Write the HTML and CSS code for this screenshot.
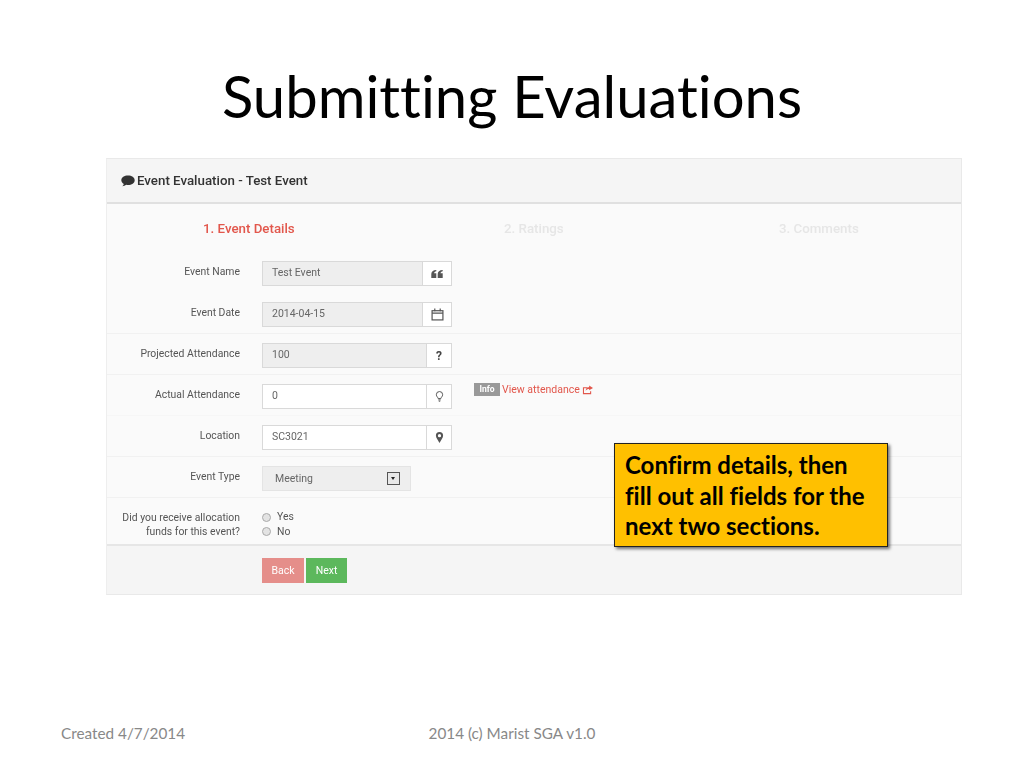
FILE: index.html
```html
<!DOCTYPE html>
<html lang="en">
<head>
    <meta charset="UTF-8">
    <title>Submitting Evaluations</title>
    <link rel="stylesheet" href="styles.css">
</head>
<body>
    <div class="slide">
        <h1 class="slide-title">Submitting Evaluations</h1>

        <div class="panel">
            <div class="panel-header">
                <svg class="icon-comment" viewBox="0 0 14 12"><path d="M7 .5C3.300 .5.300 2.600.300 5.200c0 1.500 1 2.800 2.500 3.700-.2.900-.7 1.700-1.500 2.400 1.500-.1 2.900-.7 3.900-1.500.6.100 1.200.2 1.800.2 3.700 0 6.700-2.100 6.700-4.800S10.700.5 7 .5z"/></svg>
                <span>Event Evaluation - Test Event</span>
            </div>

            <div class="steps">
                <div class="step active">1. Event Details</div>
                <div class="step">2. Ratings</div>
                <div class="step">3. Comments</div>
            </div>

            <div class="form">
                <!-- Campos do evento -->
                <div class="row no-line">
                    <label>Event Name</label>
                    <div class="group">
                        <div class="input disabled">Test Event</div>
                        <div class="addon wide">
                            <svg class="icon-quote" viewBox="0 0 12 8"><path d="M5.300 0v1.300C4 1.500 3.200 2.200 3.100 3.300h2.200V8H.3V4C.3 1.600 2 .2 5.300 0zM11.700 0v1.300c-1.300.2-2.100.9-2.200 2h2.200V8H6.700V4C6.700 1.600 8.400.2 11.700 0z"/></svg>
                        </div>
                    </div>
                </div>
                <div class="row">
                    <label>Event Date</label>
                    <div class="group">
                        <div class="input disabled">2014-04-15</div>
                        <div class="addon wide">
                            <svg class="stroke icon-calendar" viewBox="0 0 12 12"><rect x="1" y="2.500" width="10" height="8.500"/><path d="M1 4.800h10M3.500.5v2.500M8.500.5v2.500"/></svg>
                        </div>
                    </div>
                </div>
                <div class="row">
                    <label>Projected Attendance</label>
                    <div class="group">
                        <div class="input disabled">100</div>
                        <div class="addon"><b class="question">?</b></div>
                    </div>
                </div>
                <div class="row faint">
                    <label>Actual Attendance</label>
                    <div class="group">
                        <div class="input">0</div>
                        <div class="addon">
                            <svg class="stroke icon-pin" viewBox="0 0 10 12"><path d="M3.500 8.300C3.300 6.800 1.500 6 1.500 4A3.500 3.500 0 0 1 8.500 4C8.500 6 6.700 6.800 6.500 8.300z"/><path d="M3.700 9.800h2.600M4.200 11.200h1.600"/></svg>
                        </div>
                    </div>
                    <div class="help">
                        <span class="tag">Info</span>
                        <a href="#" class="help-link">View attendance
                            <svg viewBox="0 0 12 10"><path d="M1 2h5v1.200H2.200v5.100h6.600V6.300H10v3.200H1zM7.800 0L12 2.700 7.800 5.400V4C6 4 4.800 4.600 4 6c0-2.500 1.500-4 3.800-4.300z"/></svg>
                        </a>
                    </div>
                </div>
                <div class="row">
                    <label>Location</label>
                    <div class="group">
                        <div class="input">SC3021</div>
                        <div class="addon">
                            <svg class="icon-pin" viewBox="0 0 10 12"><path fill-rule="evenodd" d="M5 0a4 4 0 0 0-4 4c0 2.500 2.800 5.500 4 8 1.200-2.500 4-5.500 4-8a4 4 0 0 0-4-4zm0 2.200a1.800 1.800 0 1 1 0 3.600 1.800 1.800 0 0 1 0-3.600z"/></svg>
                        </div>
                    </div>
                </div>
                <div class="row">
                    <label>Event Type</label>
                    <div class="select">
                        <span>Meeting</span>
                        <span class="select-arrow"></span>
                    </div>
                </div>
                <div class="row radios-row">
                    <label>Did you receive allocation<br>funds for this event?</label>
                    <div class="radios">
                        <div class="radio"><i></i>Yes</div>
                        <div class="radio"><i></i>No</div>
                    </div>
                </div>
            </div>

            <div class="panel-footer">
                <button class="btn btn-back">Back</button>
                <button class="btn btn-next">Next</button>
            </div>
        </div>

        <div class="callout">Confirm details, then<br>fill out all fields for the<br>next two sections.</div>

        <div class="slide-footer">
            <span>Created 4/7/2014</span>
            <span class="footer-center">2014 (c) Marist SGA v1.0</span>
        </div>
    </div>
</body>
</html>
```

FILE: styles.css
```css
* {
    box-sizing: border-box;
}

body {
    margin: 0;
    background-color: #fff;
    font-family: Roboto, Arial, sans-serif;
}

.slide {
    position: relative;
    width: 1024px;
    height: 768px;
    overflow: hidden;
    display: flex;
    flex-direction: column;
    font-variant-ligatures: none;
}

.slide-title {
    margin: 0;
    height: 158px;
    padding-top: 59px;
    text-align: center;
    font-family: Lato, sans-serif;
    font-size: 58px;
    line-height: 74px;
    font-weight: 400;
    color: #000;
}

/* Painel do formulario */
.panel {
    width: 856px;
    height: 437px;
    margin-left: 106px;
    background-color: #fafafa;
    border: 1px solid #e9e9e9;
    border-left-color: #eee;
    display: flex;
    flex-direction: column;
    filter: blur(0.3px);
}

.panel-header {
    height: 45px;
    flex-shrink: 0;
    padding-left: 14px;
    display: flex;
    align-items: center;
    gap: 2px;
    background-color: #f5f5f5;
    border-bottom: 2px solid #e0e0e0;
    font-size: 13.300px;
    font-weight: 500;
    color: #333;
}

.icon-comment {
    width: 14px;
    height: 12px;
    fill: #333;
}

.steps {
    height: 48px;
    flex-shrink: 0;
    display: grid;
    grid-template-columns: 301px 275px 1fr;
    padding-left: 96px;
    align-items: center;
    font-size: 13.300px;
    font-weight: 500;
    color: #e6e6e6;
}

.step.active {
    color: #e2574c;
}

.form {
    flex: 1;
}

.row {
    height: 41px;
    display: flex;
    align-items: flex-start;
    padding-top: 9px;
    border-bottom: 1px solid #f1f1f1;
    font-size: 10.400px;
    color: #555;
}

.row.no-line {
    border-bottom: none;
}

.row.faint {
    border-bottom-color: #f6f6f6;
}

.row label {
    width: 133px;
    padding-top: 4px;
    margin-right: 22px;
    text-align: right;
    line-height: 14px;
}

.group {
    width: 190px;
    height: 25px;
    display: flex;
}

.input {
    flex: 1;
    background-color: #fff;
    border: 1px solid #d9d9d9;
    padding: 4px 9px;
    line-height: 14px;
    font-size: 10.500px;
    color: #666;
}

.input.disabled {
    background-color: #eee;
}

.addon {
    width: 25px;
    background-color: #fff;
    border: 1px solid #d9d9d9;
    border-left: none;
    display: flex;
    align-items: center;
    justify-content: center;
}

.addon.wide {
    width: 29px;
}

.addon svg {
    width: 11px;
    height: 11px;
    fill: #555;
}

.addon svg.stroke {
    fill: none;
    stroke: #555;
    stroke-width: 1.100;
}

.addon svg.icon-quote {
    width: 12px;
    height: 8px;
}

.addon svg.icon-calendar {
    width: 13px;
    height: 13px;
}

.addon svg.icon-pin {
    width: 9px;
    height: 11px;
}

.question {
    font-size: 12px;
    color: #444;
}

.help {
    margin-left: 22px;
    margin-top: -1px;
    display: flex;
    align-items: center;
    gap: 2px;
}

.tag {
    width: 26px;
    height: 13px;
    background-color: #999;
    color: #fff;
    font-size: 8.500px;
    font-weight: 700;
    line-height: 13px;
    text-align: center;
}

.help-link {
    color: #e2574c;
    text-decoration: none;
    font-size: 10.500px;
    display: flex;
    align-items: center;
    gap: 2px;
}

.help-link svg {
    width: 11px;
    height: 10px;
    fill: #e2574c;
}

.select {
    width: 149px;
    height: 25px;
    padding: 0 10px 0 12px;
    background-color: #eee;
    border: 1px solid #e4e4e4;
    display: flex;
    align-items: center;
    justify-content: space-between;
    font-size: 10.500px;
    color: #666;
}

.select-arrow {
    position: relative;
    width: 13px;
    height: 13px;
    background-color: #e8e8e8;
    border: 1px solid #555;
}

.select-arrow::after {
    content: "";
    position: absolute;
    left: 3px;
    top: 4px;
    border-left: 2.500px solid transparent;
    border-right: 2.500px solid transparent;
    border-top: 3px solid #222;
}

.radios-row {
    height: 46px;
    border-bottom: none;
    padding-top: 13px;
}

.radios-row label {
    padding-top: 0;
}

.radios {
    display: flex;
    flex-direction: column;
    margin-top: -1px;
    line-height: 14.500px;
}

.radio {
    display: flex;
    align-items: center;
    gap: 6px;
}

.radio i {
    width: 9px;
    height: 9px;
    border-radius: 50%;
    background-color: #e3e3e3;
    border: 1px solid #aaa;
}

.panel-footer {
    height: 50px;
    flex-shrink: 0;
    padding: 12px 0 0 155px;
    display: flex;
    align-items: flex-start;
    gap: 2px;
    background-color: #f5f5f5;
    border-top: 2px solid #e6e6e6;
}

.btn {
    height: 25px;
    border: none;
    padding: 0;
    font-family: Roboto, Arial, sans-serif;
    font-size: 10.500px;
    color: #fff;
    cursor: pointer;
}

.btn-back {
    width: 42px;
    background-color: #e58e8a;
}

.btn-next {
    width: 41px;
    background-color: #5cb85c;
}

/* Caixa amarela por cima do painel */
.callout {
    position: absolute;
    left: 614px;
    top: 443px;
    width: 274px;
    height: 104px;
    padding: 6px 10px;
    background-color: #ffc000;
    border: 1px solid #222;
    box-shadow: 2px 2px 3px rgba(0, 0, 0, 0.55);
    font-family: Lato, sans-serif;
    font-size: 24px;
    font-weight: 700;
    line-height: 30.500px;
    color: #000;
}

.slide-footer {
    position: relative;
    margin-top: auto;
    height: 44px;
    padding-left: 61px;
    font-family: Lato, sans-serif;
    font-size: 15.300px;
    color: #888;
}

.footer-center {
    position: absolute;
    left: 0;
    right: 0;
    top: 0;
    text-align: center;
}
```
